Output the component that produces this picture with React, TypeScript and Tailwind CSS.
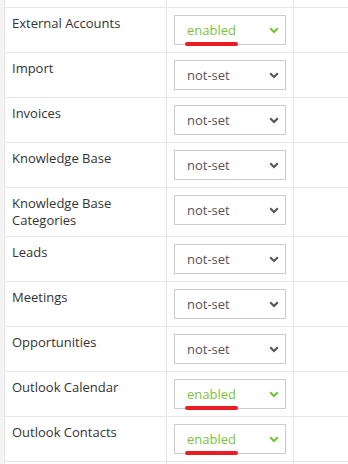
import React from "react";

type Row = { label: string; value: "enabled" | "not-set"; tall?: boolean };

const rows: Row[] = [
  { label: "External Accounts", value: "enabled" },
  { label: "Import", value: "not-set" },
  { label: "Invoices", value: "not-set" },
  { label: "Knowledge Base", value: "not-set" },
  { label: "Knowledge Base Categories", value: "not-set", tall: true },
  { label: "Leads", value: "not-set" },
  { label: "Meetings", value: "not-set" },
  { label: "Opportunities", value: "not-set" },
  { label: "Outlook Calendar", value: "enabled" },
  { label: "Outlook Contacts", value: "enabled" },
];

function Chevron({ color }: { color: string }) {
  return (
    <svg width="10" height="7" viewBox="0 0 10 7" className="shrink-0">
      <path d="M1.2 1.3 L5 5 L8.8 1.3" fill="none" stroke={color} strokeWidth="2.1" strokeLinecap="butt" />
    </svg>
  );
}

function Select({ value }: { value: "enabled" | "not-set" }) {
  const enabled = value === "enabled";
  return (
    <div className="relative w-[112px] h-[30px]">
      <div className="w-full h-full border border-[#cccccc] bg-white flex items-center pl-[12px] pr-[6px] justify-between">
        <span className={enabled ? "text-[#7cc242]" : "text-[#555555]"}>{value}</span>
        <Chevron color={enabled ? "#72c23a" : "#555555"} />
      </div>
      {enabled && (
        <div className="absolute left-[11px] top-[27px] w-[53px] h-[4px] rounded-full bg-[#ec1c24]" />
      )}
    </div>
  );
}

export default function App() {
  return (
    <div
      className="flex w-[348px] h-[464px] overflow-hidden bg-white text-[13px] leading-[17px] text-[#333333]"
      style={{ fontFamily: '"Open Sans", "Noto Sans", sans-serif' }}
    >
      <div className="w-[4px] bg-[#f3f3f3] shrink-0" />
      <div className="flex-1 flex flex-col border-l border-[#e6e6e6]">
        <div className="flex h-[7px] shrink-0">
          <div className="w-[162px] border-r border-[#e6e6e6]" />
          <div className="w-[127px] border-r border-[#e6e6e6]" />
          <div className="flex-1" />
        </div>
        {rows.map((r) => (
          <div key={r.label} className="flex border-t border-[#e6e6e6] shrink-0">
            <div className="w-[162px] border-r border-[#e6e6e6] pl-[7px] pr-[8px] py-[7px]">
              <div className={r.tall ? "w-[140px]" : ""}>{r.label}</div>
            </div>
            <div className="w-[127px] border-r border-[#e6e6e6] px-[7px] py-[7px] flex items-start">
              <Select value={r.value} />
            </div>
            <div className="flex-1" />
          </div>
        ))}
        <div className="flex flex-1 border-t border-[#e6e6e6]">
          <div className="w-[162px] border-r border-[#e6e6e6]" />
          <div className="w-[127px] border-r border-[#e6e6e6]" />
          <div className="flex-1" />
        </div>
      </div>
    </div>
  );
}
